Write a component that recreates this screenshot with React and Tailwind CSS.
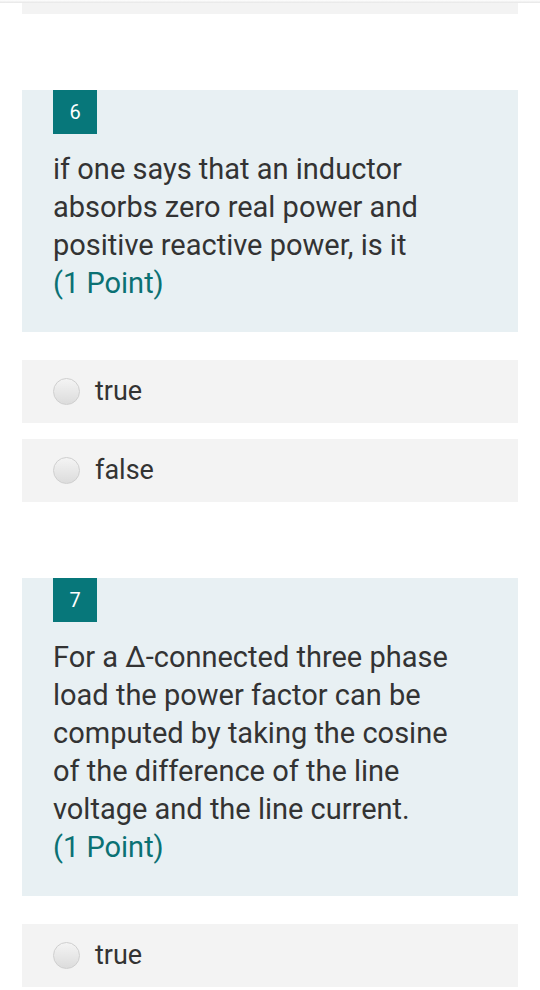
import React from 'react';

const questions = [
  {
    num: 6,
    text: 'if one says that an inductor absorbs zero real power and positive reactive power, is it',
    options: ['true', 'false'],
  },
  {
    num: 7,
    text: 'For a \u0394-connected three phase load the power factor can be computed by taking the cosine of the difference of the line voltage and the line current.',
    options: ['true'],
  },
];

const Radio = () => (
  <span className="block w-[27px] h-[27px] rounded-full border border-[#cfcfcf] bg-gradient-to-b from-[#f4f4f4] to-[#dcdcdc] shrink-0" />
);

const Question = ({ q }) => (
  <div className="mt-[76px]">
    <div className="bg-[#e8f0f3] pl-[31px] pb-[30px]">
      <div className="w-[44px] h-[44px] bg-[#07777a] text-white text-[20px] flex items-center justify-center">
        {q.num}
      </div>
      <p className="mt-[16px] w-[420px] text-[29px] leading-[38px] text-[#333333]">
        {q.text}
        <br />
        <span className="text-[#0b7173]">(1 Point)</span>
      </p>
    </div>
    <div className="mt-[28px] flex flex-col gap-[16px]">
      {q.options.map((o) => (
        <div key={o} className="flex items-center h-[63px] bg-[#f3f3f3] pl-[31px]">
          <Radio />
          <span className="ml-[15px] text-[27px] text-[#333333] leading-none">{o}</span>
        </div>
      ))}
    </div>
  </div>
);

export default function App() {
  return (
    <div className="w-[540px] h-[990px] overflow-hidden bg-white font-['Roboto',sans-serif]">
      <div className="h-[3px] bg-gradient-to-b from-white to-[#e6e6e6]" />
      <div className="px-[22px]">
        <div className="h-[11px] bg-[#f3f3f3]" />
        {questions.map((q) => (
          <Question key={q.num} q={q} />
        ))}
      </div>
    </div>
  );
}
